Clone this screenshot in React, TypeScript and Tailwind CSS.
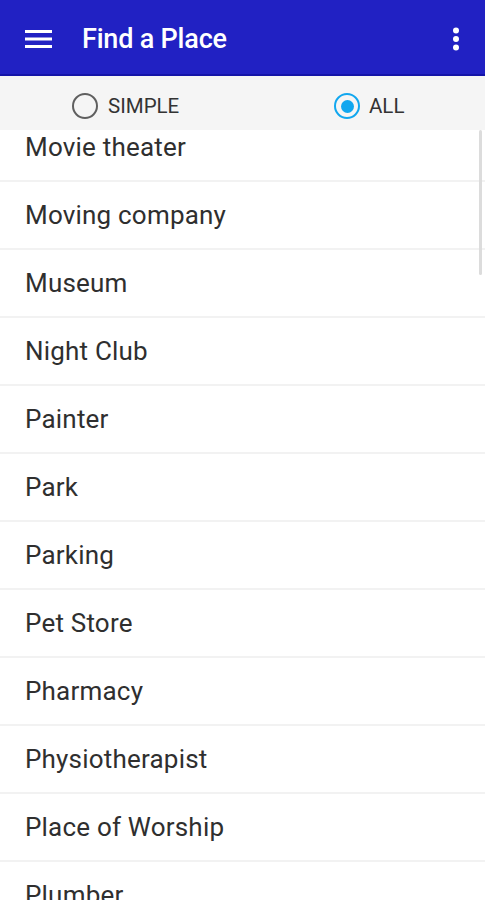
import React from "react";

const items = [
  "Movie theater",
  "Moving company",
  "Museum",
  "Night Club",
  "Painter",
  "Park",
  "Parking",
  "Pet Store",
  "Pharmacy",
  "Physiotherapist",
  "Place of Worship",
  "Plumber",
];

export default function App() {
  return (
    <div
      className="w-[485px] h-[900px] overflow-hidden bg-white flex flex-col relative"
      style={{ fontFamily: "Roboto, 'Noto Sans', sans-serif" }}
    >
      <div className="h-[76px] shrink-0 bg-[#2121c3] border-b-2 border-[#1414a8] flex items-center z-10 pt-[4px]">
        <div className="w-[82px] flex items-center pl-[25px]">
          <svg width="28" height="20" viewBox="0 0 28 20">
            <rect x="0" y="1" width="27" height="3" fill="white" />
            <rect x="0" y="8.5" width="27" height="3" fill="white" />
            <rect x="0" y="16" width="27" height="3" fill="white" />
          </svg>
        </div>
        <div className="flex-1 text-white text-[27px] font-medium tracking-[-0.2px]">Find a Place</div>
        <div className="w-[56px] flex justify-center pr-[2px]">
          <svg width="8" height="24" viewBox="0 0 8 24">
            <circle cx="4" cy="3.5" r="3" fill="white" />
            <circle cx="4" cy="12" r="3" fill="white" />
            <circle cx="4" cy="20.5" r="3" fill="white" />
          </svg>
        </div>
      </div>
      <div className="h-[54px] shrink-0 bg-[#f5f5f5] flex items-center z-10 relative">
        <div className="flex items-center absolute left-[72px] top-[15px]">
          <div className="w-[26px] h-[26px] rounded-full border-[2.5px] border-[#5f5f5f]" />
          <span className="ml-[10px] text-[20.5px] text-[#333]">SIMPLE</span>
        </div>
        <div className="flex items-center absolute left-[334px] top-[15px]">
          <div className="w-[26px] h-[26px] rounded-full border-[2.5px] border-[#11a7ef] flex items-center justify-center">
            <div className="w-[13px] h-[13px] rounded-full bg-[#11a7ef]" />
          </div>
          <span className="ml-[9px] text-[20.5px] text-[#333]">ALL</span>
        </div>
      </div>
      <div className="flex-1 overflow-hidden relative">
        <div className="mt-[-16px] flex flex-col">
          {items.map((t) => (
            <div key={t} className="h-[68px] shrink-0 flex items-center pl-[25px] border-b-2 border-[#f2f2f2]">
              <span className="text-[26px] tracking-[0.2px] text-[#2f2f2f] leading-none">{t}</span>
            </div>
          ))}
        </div>
        <div className="absolute right-[3px] top-0 w-[3px] h-[145px] bg-[#dcdcdc] rounded-sm" />
      </div>
    </div>
  );
}
